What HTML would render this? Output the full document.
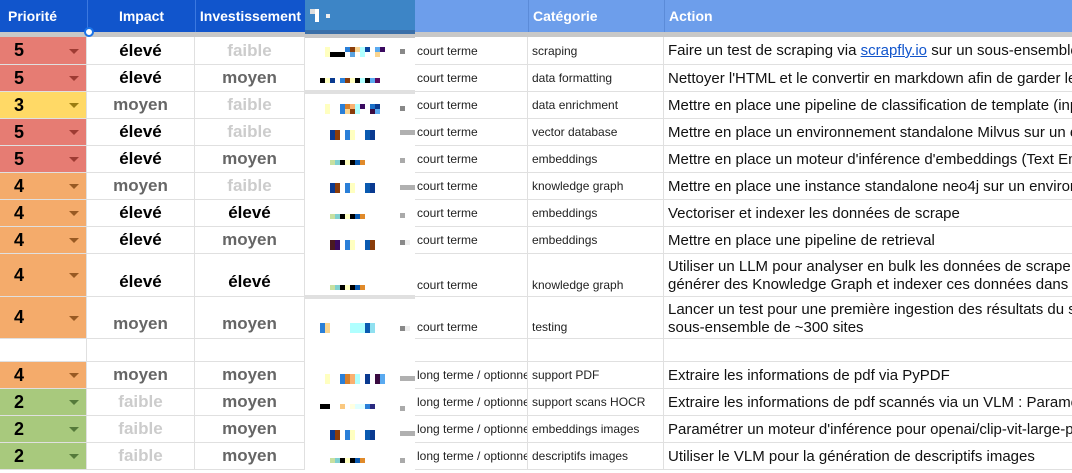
<!DOCTYPE html>
<html><head><meta charset="utf-8"><style>
*{margin:0;padding:0;box-sizing:border-box}
body{width:1072px;height:473px;overflow:hidden;background:#fff;font-family:"Liberation Sans",Arial,sans-serif;position:relative}
.a{position:absolute}
.hd{top:0;height:32px;color:#fff;font-weight:bold;font-size:14px;display:flex;align-items:center}
.row{position:absolute;left:0;width:1072px;border-bottom:1px solid #e0e0e0}
.c{position:absolute;top:0;bottom:0;display:flex;border-right:1px solid #e0e0e0;white-space:nowrap;overflow:hidden}
.p{left:0;width:87px;font-weight:bold;font-size:18px;align-items:center;padding-left:14px;color:#000}
.p i{position:absolute;left:69px;top:50%;margin-top:-2px;border-left:5px solid transparent;border-right:5px solid transparent;border-top:5px solid}
.im{left:87px;width:108px;justify-content:center;align-items:center;font-weight:bold;font-size:17px}
.iv{left:195px;width:110px;justify-content:center;align-items:center;font-weight:bold;font-size:17px}
.t{left:415px;width:113px;align-items:center;padding-left:2px;font-size:12px;color:#222}
.k{left:528px;width:136px;align-items:center;padding-left:4px;font-size:12px;color:#222}
.ac{left:664px;width:408px;align-items:center;padding-left:4px;font-size:15px;color:#111;border-right:none}
.tall .t,.tall .k{align-items:flex-end;padding-bottom:4px}
.tall .im,.tall .iv{align-items:flex-end;padding-bottom:4px}
.tall .ac{white-space:normal;line-height:18px;align-items:flex-start;padding-top:4px}
.e{color:#000}.m{color:#666}.f{color:#ccc}
.R{background:#e67c73}.R i{color:#9e3b33}
.Y{background:#ffd966}.Y i{color:#9a7c10}
.O{background:#f4ab6b}.O i{color:#985a23}
.G{background:#a8c97d}.G i{color:#557a3a}
.nz{position:absolute;height:5px;width:5px}
</style></head><body>
<div class="a hd" style="left:0;width:87px;background:#1155cc;padding-left:8px">Priorité</div>
<div class="a hd" style="left:87px;width:108px;background:#1155cc;justify-content:center;border-left:1px solid #3b78e0">Impact</div>
<div class="a hd" style="left:195px;width:110px;background:#1155cc;justify-content:center;border-left:1px solid #3b78e0">Investissement</div>
<div class="a hd" style="left:415px;width:657px;background:#6d9eeb"></div>
<div class="a hd" style="left:528px;width:136px;background:#6d9eeb;padding-left:4px;border-left:1px solid #5b8bd8">Catégorie</div>
<div class="a hd" style="left:664px;width:408px;background:#6d9eeb;padding-left:4px;border-left:1px solid #5b8bd8">Action</div>
<div class="a" style="left:0;top:32px;width:1072px;height:5px;background:#c8c8c8"></div>
<div class="a" style="left:84px;top:27px;width:10px;height:10px;border:2px solid #1a73e8;border-radius:50%;background:#fff;z-index:3"></div>

<div class="row" style="top:37px;height:28px"><div class="c p R">5<i></i></div><div class="c im e">élevé</div><div class="c iv f">faible</div><div class="c t">court terme</div><div class="c k">scraping</div><div class="c ac">Faire un test de scraping via&nbsp;<span style="color:#1155cc;text-decoration:underline">scrapfly.io</span>&nbsp;sur un sous-ensemble de</div></div>
<div class="row" style="top:65px;height:27px"><div class="c p R">5<i></i></div><div class="c im e">élevé</div><div class="c iv m">moyen</div><div class="c t">court terme</div><div class="c k">data formatting</div><div class="c ac">Nettoyer l'HTML et le convertir en markdown afin de garder les</div></div>
<div class="row" style="top:92px;height:27px"><div class="c p Y">3<i></i></div><div class="c im m">moyen</div><div class="c iv f">faible</div><div class="c t">court terme</div><div class="c k">data enrichment</div><div class="c ac">Mettre en place une pipeline de classification de template (inp</div></div>
<div class="row" style="top:119px;height:27px"><div class="c p R">5<i></i></div><div class="c im e">élevé</div><div class="c iv f">faible</div><div class="c t">court terme</div><div class="c k">vector database</div><div class="c ac">Mettre en place un environnement standalone Milvus sur un env</div></div>
<div class="row" style="top:146px;height:27px"><div class="c p R">5<i></i></div><div class="c im e">élevé</div><div class="c iv m">moyen</div><div class="c t">court terme</div><div class="c k">embeddings</div><div class="c ac">Mettre en place un moteur d'inférence d'embeddings (Text Em</div></div>
<div class="row" style="top:173px;height:27px"><div class="c p O">4<i></i></div><div class="c im m">moyen</div><div class="c iv f">faible</div><div class="c t">court terme</div><div class="c k">knowledge graph</div><div class="c ac">Mettre en place une instance standalone neo4j sur un environ</div></div>
<div class="row" style="top:200px;height:27px"><div class="c p O">4<i></i></div><div class="c im e">élevé</div><div class="c iv e">élevé</div><div class="c t">court terme</div><div class="c k">embeddings</div><div class="c ac">Vectoriser et indexer les données de scrape</div></div>
<div class="row" style="top:227px;height:27px"><div class="c p O">4<i></i></div><div class="c im e">élevé</div><div class="c iv m">moyen</div><div class="c t">court terme</div><div class="c k">embeddings</div><div class="c ac">Mettre en place une pipeline de retrieval</div></div>
<div class="row tall" style="top:254px;height:43px"><div class="c p O">4<i></i></div><div class="c im e">élevé</div><div class="c iv e">élevé</div><div class="c t">court terme</div><div class="c k">knowledge graph</div><div class="c ac" style="width:420px">Utiliser un LLM pour analyser en bulk les données de scrape, générer des Knowledge Graph et indexer ces données dans</div></div>
<div class="row tall" style="top:297px;height:42px"><div class="c p O">4<i></i></div><div class="c im m">moyen</div><div class="c iv m">moyen</div><div class="c t">court terme</div><div class="c k">testing</div><div class="c ac" style="width:420px">Lancer un test pour une première ingestion des résultats du s sous-ensemble de ~300 sites</div></div>
<div class="row" style="top:339px;height:23px"><div class="c p" style="border-right:1px solid #e0e0e0"></div><div class="c im"></div><div class="c iv"></div><div class="c t"></div><div class="c k"></div><div class="c ac"></div></div>
<div class="row" style="top:362px;height:27px"><div class="c p O">4<i></i></div><div class="c im m">moyen</div><div class="c iv m">moyen</div><div class="c t">long terme / optionnel</div><div class="c k">support PDF</div><div class="c ac">Extraire les informations de pdf via PyPDF</div></div>
<div class="row" style="top:389px;height:27px"><div class="c p G">2<i></i></div><div class="c im f">faible</div><div class="c iv m">moyen</div><div class="c t">long terme / optionnel</div><div class="c k">support scans HOCR</div><div class="c ac">Extraire les informations de pdf scannés via un VLM : Paramé</div></div>
<div class="row" style="top:416px;height:27px"><div class="c p G">2<i></i></div><div class="c im f">faible</div><div class="c iv m">moyen</div><div class="c t">long terme / optionnel</div><div class="c k">embeddings images</div><div class="c ac">Paramétrer un moteur d'inférence pour openai/clip-vit-large-p</div></div>
<div class="row" style="top:443px;height:27px"><div class="c p G">2<i></i></div><div class="c im f">faible</div><div class="c iv m">moyen</div><div class="c t">long terme / optionnel</div><div class="c k">descriptifs images</div><div class="c ac">Utiliser le VLM pour la génération de descriptifs images</div></div>

<div class="a" style="left:305px;top:0;width:110px;height:473px;background:#fff;z-index:2">
  <div class="a" style="left:0;top:0;width:110px;height:30px;background:#3d85c6"></div>
  <div class="a" style="left:0;top:30px;width:110px;height:4px;background:#3a6fa8"></div>
  <div class="a" style="left:0;top:34px;width:110px;height:4px;background:#c8c8c8"></div>
  <div class="a" style="left:5px;top:9px;width:5px;height:5px;background:#ddd"></div>
  <div class="a" style="left:10px;top:9px;width:4px;height:13px;background:#fff"></div>
  <div class="a" style="left:21px;top:14px;width:4px;height:4px;background:#eee"></div>
  <div class="a" style="left:0;top:90px;width:110px;height:4px;background:#e0e0e0"></div>
  <div class="a" style="left:0;top:295px;width:110px;height:4px;background:#e0e0e0"></div>
</div>
<div class="a" style="left:305px;top:0;width:110px;height:473px;z-index:3">
<div class="nz" style="left:20px;top:47px;height:10px;background:#ffffc0"></div><div class="nz" style="left:25px;top:52px;width:15px;background:#000"></div><div class="nz" style="left:40px;top:47px;background:#2a7fd8"></div><div class="nz" style="left:45px;top:47px;background:#8a3c0a"></div><div class="nz" style="left:50px;top:47px;background:#fad590"></div><div class="nz" style="left:45px;top:52px;background:#5ba3e0"></div><div class="nz" style="left:55px;top:47px;height:10px;background:#b0ffff"></div><div class="nz" style="left:60px;top:47px;background:#0a44a0"></div><div class="nz" style="left:70px;top:47px;background:#5aaaf0"></div><div class="nz" style="left:75px;top:47px;background:#3a0a60"></div><div class="nz" style="left:70px;top:52px;background:#fad590"></div><div class="nz" style="left:95px;top:49px;background:#888"></div>
<div class="nz" style="left:15px;top:78px;background:#000"></div><div class="nz" style="left:20px;top:78px;background:#ffffc0"></div><div class="nz" style="left:25px;top:78px;background:#0a3a90"></div><div class="nz" style="left:35px;top:78px;background:#2a7fd8"></div><div class="nz" style="left:40px;top:78px;background:#8a3c0a"></div><div class="nz" style="left:45px;top:78px;background:#ffffc0"></div><div class="nz" style="left:50px;top:78px;background:#000"></div><div class="nz" style="left:55px;top:78px;background:#b0ffff"></div><div class="nz" style="left:60px;top:78px;background:#000"></div><div class="nz" style="left:65px;top:78px;background:#5aaaf0"></div><div class="nz" style="left:70px;top:78px;background:#5a0a60"></div>
<div class="nz" style="left:20px;top:104px;height:10px;background:#ffffc0"></div><div class="nz" style="left:35px;top:104px;height:10px;background:#2a7fd8"></div><div class="nz" style="left:40px;top:104px;background:#d8802a"></div><div class="nz" style="left:45px;top:104px;background:#fab070"></div><div class="nz" style="left:40px;top:109px;background:#fad590"></div><div class="nz" style="left:45px;top:109px;background:#8a3c0a"></div><div class="nz" style="left:50px;top:104px;height:10px;background:#b0ffff"></div><div class="nz" style="left:55px;top:104px;background:#3a0a60"></div><div class="nz" style="left:65px;top:104px;background:#1a70c8"></div><div class="nz" style="left:70px;top:104px;background:#0a3a90"></div><div class="nz" style="left:65px;top:109px;background:#3a0a40"></div><div class="nz" style="left:70px;top:109px;background:#5aaaf0"></div><div class="nz" style="left:95px;top:106px;background:#888"></div>
</div>
<div class="a" style="left:305px;top:0;width:110px;height:473px;z-index:3">
<div style="position:absolute;left:25px;top:130px;width:60px;height:10px;background:linear-gradient(90deg,#0a3a90 0 5px,#8a3c0a 5px 10px,transparent 10px 15px,#2a7fd8 15px 20px,#ffffc0 20px 25px,transparent 25px 35px,#0a5ab0 35px 40px,#0a3a90 40px 45px,transparent 45px)"></div>
<div class="nz" style="left:95px;top:130px;width:15px;background:#b0b0b0"></div>
<div style="position:absolute;left:25px;top:160px;width:40px;height:5px;background:linear-gradient(90deg,#c8e0a0 0 5px,#80d0d0 5px 10px,#000 10px 15px,#ffffc0 15px 20px,#000 20px 25px,#0a5ab0 25px 30px,#e08a2a 30px 35px,transparent 35px)"></div>
<div class="nz" style="left:95px;top:158px;background:#aaa"></div>
<div style="position:absolute;left:25px;top:183px;width:60px;height:10px;background:linear-gradient(90deg,#0a3a90 0 5px,#8a3c0a 5px 10px,transparent 10px 15px,#2a7fd8 15px 20px,#ffffc0 20px 25px,transparent 25px 35px,#0a5ab0 35px 40px,#0a3a90 40px 45px,transparent 45px)"></div>
<div class="nz" style="left:95px;top:185px;width:15px;background:#b0b0b0"></div>
<div style="position:absolute;left:25px;top:214px;width:40px;height:5px;background:linear-gradient(90deg,#c8e0a0 0 5px,#80d0d0 5px 10px,#000 10px 15px,#ffffc0 15px 20px,#000 20px 25px,#0a5ab0 25px 30px,#e08a2a 30px 35px,transparent 35px)"></div>
<div class="nz" style="left:95px;top:213px;background:#aaa"></div>
<div style="position:absolute;left:25px;top:240px;width:60px;height:10px;background:linear-gradient(90deg,#4a1a20 0 5px,#3a0a60 5px 10px,transparent 10px 15px,#2a7fd8 15px 20px,#ffffc0 20px 25px,transparent 25px 35px,#0a5ab0 35px 40px,#8a3c0a 40px 45px,transparent 45px)"></div>
<div class="nz" style="left:95px;top:240px;width:10px;background:linear-gradient(90deg,#888 50%,#eee 50%)"></div>
<div style="position:absolute;left:25px;top:285px;width:40px;height:5px;background:linear-gradient(90deg,#c8e0a0 0 5px,#80d0d0 5px 10px,#000 10px 15px,#ffffc0 15px 20px,#000 20px 25px,#0a5ab0 25px 30px,#e08a2a 30px 35px,transparent 35px)"></div>
<div style="position:absolute;left:15px;top:323px;width:60px;height:10px;background:linear-gradient(90deg,#2a7fd8 0 5px,#fad590 5px 10px,transparent 10px 30px,#b0ffff 30px 45px,#0a5ab0 45px 50px,#90e0f0 50px 55px,transparent 55px)"></div>
<div class="nz" style="left:95px;top:326px;width:10px;background:linear-gradient(90deg,#888 50%,#eee 50%)"></div>
<div style="position:absolute;left:20px;top:374px;width:60px;height:10px;background:linear-gradient(90deg,#ffffc0 0 5px,transparent 5px 15px,#2a7fd8 15px 20px,#d8802a 20px 25px,#fab070 25px 30px,#b0ffff 30px 35px,transparent 35px 40px,#0a3a90 40px 45px,transparent 45px 50px,#3a0a40 50px 55px,#5aaaf0 55px 60px)"></div>
<div class="nz" style="left:95px;top:376px;width:15px;background:#b0b0b0"></div>
<div style="position:absolute;left:15px;top:404px;width:65px;height:5px;background:linear-gradient(90deg,#000 0 10px,transparent 10px 20px,#fac880 20px 25px,transparent 25px 30px,#ffffe0 30px 35px,#e0ffff 35px 45px,#2a7fd8 45px 50px,#2a2a80 50px 55px,transparent 55px)"></div>
<div class="nz" style="left:95px;top:406px;background:#aaa"></div>
<div style="position:absolute;left:25px;top:430px;width:60px;height:10px;background:linear-gradient(90deg,#0a3a90 0 5px,#8a3c0a 5px 10px,transparent 10px 15px,#2a7fd8 15px 20px,#ffffc0 20px 25px,transparent 25px 35px,#0a5ab0 35px 40px,#0a3a90 40px 45px,transparent 45px)"></div>
<div class="nz" style="left:95px;top:431px;width:15px;background:#b0b0b0"></div>
<div style="position:absolute;left:25px;top:458px;width:40px;height:5px;background:linear-gradient(90deg,#c8e0a0 0 5px,#80d0d0 5px 10px,#000 10px 15px,#ffffc0 15px 20px,#000 20px 25px,#0a5ab0 25px 30px,#e08a2a 30px 35px,transparent 35px)"></div>
<div class="nz" style="left:95px;top:458px;background:#aaa"></div>
</div>
</body></html>
